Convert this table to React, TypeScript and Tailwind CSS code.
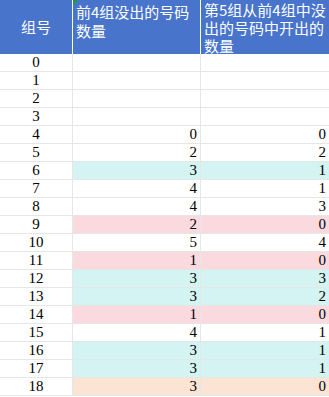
import React from "react";

type Row = { n: number; a?: number; b?: number; c?: "w" | "p" | "c" | "o" };

const rows: Row[] = [
  { n: 0 },
  { n: 1 },
  { n: 2 },
  { n: 3 },
  { n: 4, a: 0, b: 0, c: "w" },
  { n: 5, a: 2, b: 2, c: "w" },
  { n: 6, a: 3, b: 1, c: "c" },
  { n: 7, a: 4, b: 1, c: "w" },
  { n: 8, a: 4, b: 3, c: "w" },
  { n: 9, a: 2, b: 0, c: "p" },
  { n: 10, a: 5, b: 4, c: "w" },
  { n: 11, a: 1, b: 0, c: "p" },
  { n: 12, a: 3, b: 3, c: "c" },
  { n: 13, a: 3, b: 2, c: "c" },
  { n: 14, a: 1, b: 0, c: "p" },
  { n: 15, a: 4, b: 1, c: "w" },
  { n: 16, a: 3, b: 1, c: "c" },
  { n: 17, a: 3, b: 1, c: "c" },
  { n: 18, a: 3, b: 0, c: "o" },
];

function bg(c?: string) {
  if (c === "p") return "bg-[#fadadf]";
  if (c === "c") return "bg-[#d3f4f2]";
  if (c === "o") return "bg-[#fce4d5]";
  return "bg-white";
}

const cjk = "font-['Noto_Sans_CJK_SC',sans-serif]";
const num = "font-['Liberation_Serif',serif] text-[15px] text-black";

export default function App() {
  return (
    <div className="w-[329px] h-[397px] bg-white overflow-hidden">
      <div className="grid grid-cols-[73px_128px_128px]">
        <div
          className={`h-[54px] bg-[#4874cb] border-r border-white flex items-center justify-center text-white text-[15px] leading-[18px] ${cjk}`}
        >
          组号
        </div>
        <div
          className={`relative h-[54px] bg-[#4874cb] border-r border-white text-white text-[15px] leading-[19px] pl-[3px] pt-[2px] ${cjk}`}
        >
          <div className="absolute left-0 top-0 w-0 h-0 border-t-[5px] border-r-[5px] border-t-[#1f9a3a] border-r-transparent" />
          <div>前4组没出的号码</div>
          <div>数量</div>
        </div>
        <div
          className={`h-[54px] bg-[#4874cb] text-white text-[15px] leading-[18px] pl-[3px] pt-[1px] ${cjk}`}
        >
          <div>第5组从前4组中没</div>
          <div>出的号码中开出的</div>
          <div>数量</div>
        </div>
        {rows.map((r) => (
          <React.Fragment key={r.n}>
            <div
              className={`h-[18px] border-r border-b border-[#e6e6e6] flex items-center justify-center ${num}`}
            >
              {r.n}
            </div>
            <div
              className={`h-[18px] border-r border-b border-[#e6e6e6] flex items-center justify-end pr-[3px] ${num} ${bg(r.c)}`}
            >
              {r.a ?? ""}
            </div>
            <div
              className={`h-[18px] border-b border-[#e6e6e6] flex items-center justify-end pr-[3px] ${num} ${bg(r.c)}`}
            >
              {r.b ?? ""}
            </div>
          </React.Fragment>
        ))}
      </div>
    </div>
  );
}
